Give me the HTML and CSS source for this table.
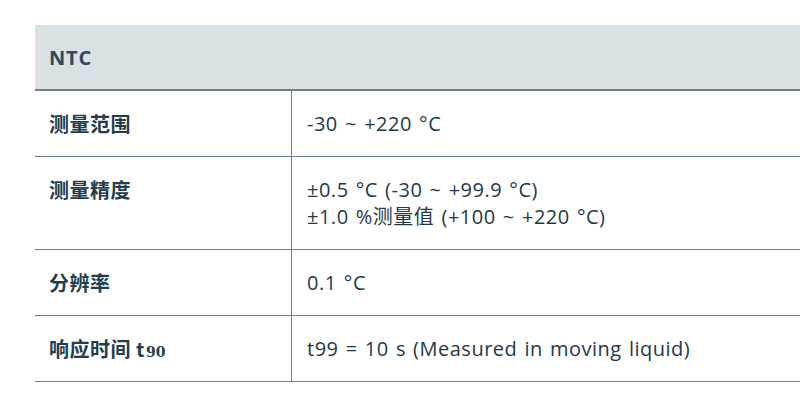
FILE: index.html
```html
<!DOCTYPE html>
<html>
<head>
<meta charset="utf-8">
<link rel="stylesheet" href="styles.css">
</head>
<body>
<div class="wrap">
  <table class="spec">
    <thead>
      <tr><th colspan="2">NTC</th></tr>
    </thead>
    <tbody>
      <tr><td class="k">测量范围</td><td class="v">-30 ~ +220 °C</td></tr>
      <tr><td class="k">测量精度</td><td class="v">±0.5 °C (-30 ~ +99.9 °C)<br>±1.0 %测量值 (+100 ~ +220 °C)</td></tr>
      <tr><td class="k">分辨率</td><td class="v">0.1 °C</td></tr>
      <tr><td class="k">响应时间 t<span class="sub">90</span></td><td class="v">t99 = 10 s (Measured in moving liquid)</td></tr>
    </tbody>
  </table>
</div>
</body>
</html>
```
FILE: styles.css
```css
html, body { margin: 0; padding: 0; background: #fff; }
body { font-family: "Open Sans", "Noto Sans CJK SC", sans-serif; color: #1f3949; overflow: hidden; width: 800px; height: 402px; }
.wrap { padding: 25px 0 0 35px; width: 900px; }
.spec { border-collapse: collapse; width: 900px; font-size: 20px; line-height: 27px; }
.spec th { background: #d9e1e4; text-align: left; font-weight: 700; padding: 19px 14px 18px; height: 27px; border-bottom: 2px solid #6d808a; color: #33495a; letter-spacing: 0.8px; }
.spec td { padding: 19px 14px 19px; vertical-align: top; border-bottom: 1px solid #6d808a; }
.spec td.k { width: 228px; font-weight: 700; border-right: 1px solid #6d808a; font-family: "Noto Sans CJK SC", sans-serif; letter-spacing: 0.5px; color: #233d4c; }
.spec td.v { padding-left: 15px; letter-spacing: 0.5px; word-spacing: 1.5px; }
.sub { font-family: "DejaVu Serif", serif; font-size: 14px; line-height: 1; font-weight: 700; letter-spacing: 0; margin-left: 1px; }
```
